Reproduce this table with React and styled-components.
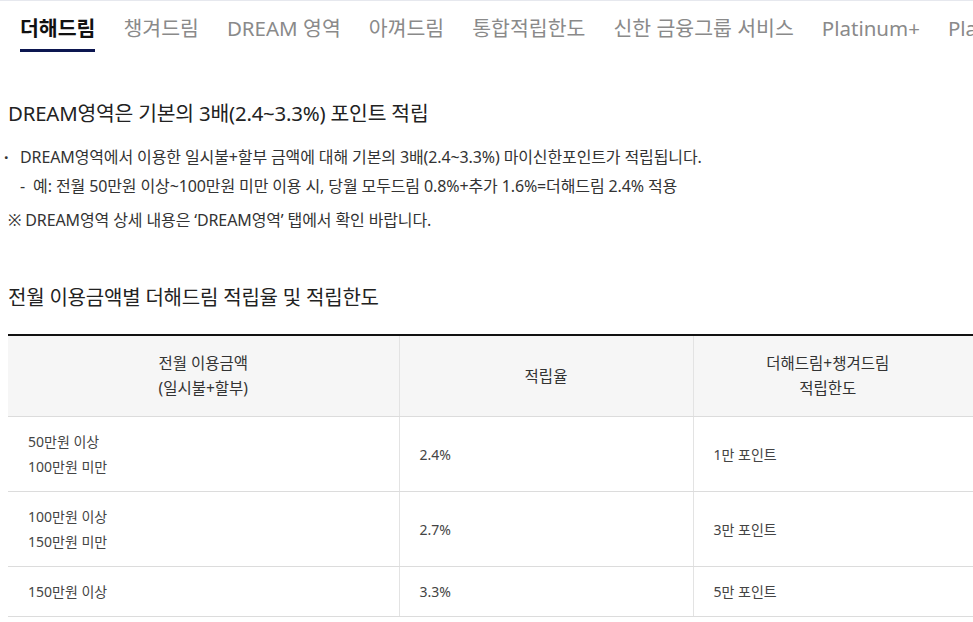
import React from "react";
import styled, { createGlobalStyle } from "styled-components";

const Global = createGlobalStyle`
  html, body { margin: 0; padding: 0; background: #fff; overflow: hidden; }
  body { font-family: "Noto Sans", "Noto Sans CJK KR", sans-serif; color: #333; }
  * { box-sizing: border-box; }
`;

const Page = styled.div`
  width: 973px;
  overflow: hidden;
  border-top: 1px solid #e6e8ee;
`;

const Tabs = styled.nav`
  display: flex;
  white-space: nowrap;
  padding: 0 0 0 20px;
  height: 52px;
  overflow: hidden;
`;

const Tab = styled.div`
  flex: none;
  margin-right: 28px;
  font-size: 20.5px;
  height: 51px;
  line-height: 54px;
  color: ${p => (p.$active ? "#111" : "#8a8a8a")};
  font-weight: ${p => (p.$active ? 700 : 400)};
  border-bottom: 3px solid ${p => (p.$active ? "#0c1650" : "transparent")};
`;

const Content = styled.div`
  padding: 0 0 0 8px;
`;

const Heading = styled.h2`
  margin: ${p => p.$top}px 0 0 0;
  font-size: ${p => p.$size || 20.2}px;
  font-weight: 400;
  color: #222;
  line-height: 24px;
  letter-spacing: -0.2px;
`;

const List = styled.ul`
  list-style: none;
  margin: 22px 0 0 0;
  padding: 0;
`;

const Item = styled.li`
  position: relative;
  padding-left: 12px;
  font-size: 16px;
  line-height: 20px;
  color: #333;
  letter-spacing: -0.12px;
  &::before {
    content: "·";
    position: absolute;
    left: -4px;
    top: 0;
    font-weight: 700;
  }
`;

const SubItem = styled.p`
  margin: 9px 0 0 12px;
  font-size: 16px;
  line-height: 20px;
  color: #333;
  letter-spacing: -0.12px;
`;

const Note = styled.p`
  margin: 14px 0 0 0;
  font-size: 16px;
  line-height: 20px;
  color: #333;
  letter-spacing: -0.12px;
`;

const Table = styled.table`
  width: 1000px;
  border-collapse: collapse;
  table-layout: fixed;
  border-top: 2px solid #111;
  margin-top: 24px;
`;

const Th = styled.th`
  background: #f6f6f6;
  font-weight: 400;
  font-size: 15.5px;
  line-height: 25px;
  color: #333;
  padding: 15px ${p => p.$padRight || 10}px 15px 10px;
  text-align: center;
  border-bottom: 1px solid #dcdcdc;
  border-left: 1px solid #e3e3e3;
  &:first-child { border-left: none; }
`;

const Td = styled.td`
  font-size: 14px;
  line-height: 25px;
  color: #444;
  padding: 12px 20px;
  text-align: left;
  border-bottom: 1px solid #dcdcdc;
  border-left: 1px solid #e3e3e3;
  &:first-child { border-left: none; }
`;

const tabs = ["더해드림", "챙겨드림", "DREAM 영역", "아껴드림", "통합적립한도", "신한 금융그룹 서비스", "Platinum+", "Platinum+ 서비스"];

const rows = [
  [["50만원 이상", "100만원 미만"], "2.4%", "1만 포인트"],
  [["100만원 이상", "150만원 미만"], "2.7%", "3만 포인트"],
  [["150만원 이상"], "3.3%", "5만 포인트"],
];

export default function App() {
  return (
    <>
      <Global />
      <Page>
        <Tabs>
          {tabs.map((t, i) => (
            <Tab key={t} $active={i === 0}>{t}</Tab>
          ))}
        </Tabs>
        <Content>
          <Heading $top={48} $size={20.4}>DREAM영역은 기본의 3배(2.4~3.3%) 포인트 적립</Heading>
          <List>
            <Item>DREAM영역에서 이용한 일시불+할부 금액에 대해 기본의 3배(2.4~3.3%) 마이신한포인트가 적립됩니다.</Item>
          </List>
          <SubItem>-&nbsp; 예: 전월 50만원 이상~100만원 미만 이용 시, 당월 모두드림 0.8%+추가 1.6%=더해드림 2.4% 적용</SubItem>
          <Note>※ DREAM영역 상세 내용은 ‘DREAM영역’ 탭에서 확인 바랍니다.</Note>
          <Heading $top={56} $size={20}>전월 이용금액별 더해드림 적립율 및 적립한도</Heading>
          <Table>
            <colgroup>
              <col style={{ width: 391 }} />
              <col style={{ width: 294 }} />
              <col />
            </colgroup>
            <thead>
              <tr>
                <Th>전월 이용금액<br />(일시불+할부)</Th>
                <Th>적립율</Th>
                <Th $padRight={56}>더해드림+챙겨드림<br />적립한도</Th>
              </tr>
            </thead>
            <tbody>
              {rows.map((r, i) => (
                <tr key={i}>
                  <Td>{r[0].map((l, j) => (<React.Fragment key={j}>{j > 0 && <br />}{l}</React.Fragment>))}</Td>
                  <Td>{r[1]}</Td>
                  <Td>{r[2]}</Td>
                </tr>
              ))}
            </tbody>
          </Table>
        </Content>
      </Page>
    </>
  );
}
